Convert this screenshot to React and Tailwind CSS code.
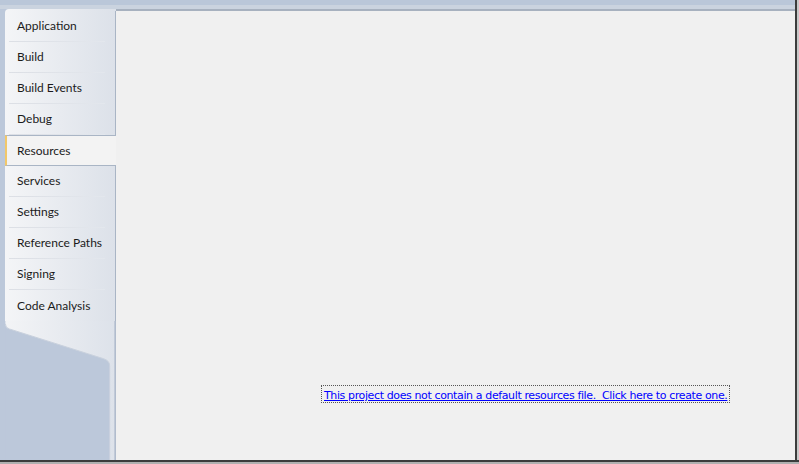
import React from 'react';

const tabs = [
  'Application',
  'Build',
  'Build Events',
  'Debug',
  'Resources',
  'Services',
  'Settings',
  'Reference Paths',
  'Signing',
  'Code Analysis',
];

const font = { fontFamily: 'Lato, "Open Sans", sans-serif' };

const Tab = ({ label, selected, last }) => {
  if (selected) {
    return (
      <div className="relative h-[31px] w-[111px] bg-[#f3f3f3] border-y border-[#a9b5c5] border-l-2 border-l-[#f2c86a] flex items-center pl-[10px] z-10">
        <span className="text-[12px] text-[#1b1b1b]">{label}</span>
      </div>
    );
  }
  return (
    <div className="h-[31px] w-[111px] flex flex-col border-r border-[#a9b5c5]">
      <div className="flex-1 flex items-center pl-[12px]">
        <span className="text-[12px] text-[#1b1b1b]">{label}</span>
      </div>
      {!last && <div className="h-px ml-[4px] mr-[10px] bg-gradient-to-r from-[#dcdfe5] to-[#e3e7ed]" />}
    </div>
  );
};

const Tail = () => (
  <svg width="111" height="140" viewBox="0 0 111 140" className="block">
    <defs>
      <linearGradient id="tailfill" x1="0" y1="0" x2="1" y2="0">
        <stop offset="0" stopColor="#f3f4f6" />
        <stop offset="1" stopColor="#dde2ea" />
      </linearGradient>
    </defs>
    <rect x="0" y="0" width="111" height="140" fill="#bcc8da" />
    <path d="M0,0 H110 V140 H105 V45 Q105,40 99,38 L4,8 Q0,7 0,3 Z" fill="url(#tailfill)" />
    <path d="M0,3 Q0,7 4,8 L99,38 Q105,40 105,45 V140" fill="none" stroke="#c9d1dd" strokeWidth="1" />
    <line x1="110.5" y1="0" x2="110.5" y2="140" stroke="#a9b5c5" />
  </svg>
);

export default function App() {
  return (
    <div className="w-[799px] h-[464px] bg-[#bcc8da] flex flex-col overflow-hidden" style={font}>
      <div className="flex flex-1 min-h-0">
        <div className="flex flex-col flex-1 min-w-0">
          <div className="h-[5px] bg-[#bac7d9]" />
          <div className="h-[4px] bg-[#cad3df]" />
          <div className="flex flex-1 min-h-0">
            <div className="w-[5px]" />
            <div className="flex flex-col w-[111px]">
              <div className="rounded-tl-[4px] bg-gradient-to-r from-[#f4f5f7] to-[#dce1e9] flex flex-col pt-[2px]">
                {tabs.map((t, i) => (
                  <Tab key={t} label={t} selected={t === 'Resources'} last={i === tabs.length - 1} />
                ))}
              </div>
              <Tail />
            </div>
            <div className="flex-1 bg-[#f0f0f0] border-t-2 border-[#a7b1bf] relative">
              <div className="absolute left-[205px] top-[374px] border border-dotted border-[#555] pl-[2px] pr-[2px] leading-[13px]">
                <span
                  className="whitespace-pre text-[11px] text-[#0000ff] underline"
                  style={{ fontFamily: '"DejaVu Sans", sans-serif', letterSpacing: '-0.38px' }}
                >
                  This project does not contain a default resources file.  Click here to create one.
                </span>
              </div>
            </div>
          </div>
        </div>
        <div className="w-[4px] flex">
          <div className="w-[2px] bg-[#3c3c3c]" />
          <div className="w-[2px] bg-[#c8c8c8]" />
        </div>
      </div>
      <div className="h-[4px] flex flex-col">
        <div className="h-[2px] bg-[#3c3c3c]" />
        <div className="h-[2px] bg-[#b0b0b0]" />
      </div>
    </div>
  );
}
